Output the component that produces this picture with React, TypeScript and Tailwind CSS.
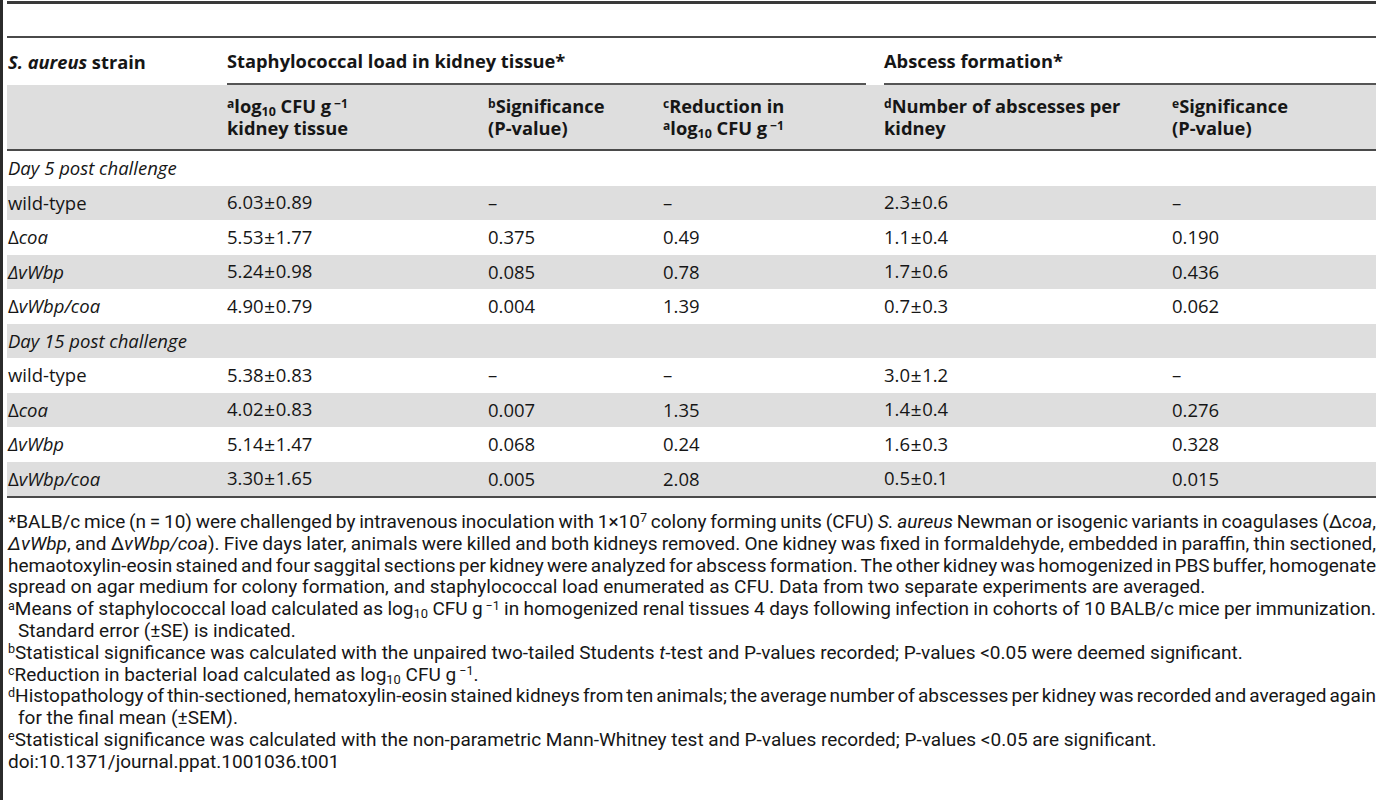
import React from "react";

const cols = "grid grid-cols-[220px_261px_175px_221px_288px_1fr]";

type Row = {
  kind: "section" | "data";
  label: React.ReactNode;
  values?: string[];
};

const rows: Row[] = [
  { kind: "section", label: "Day 5 post challenge" },
  { kind: "data", label: "wild-type", values: ["6.03±0.89", "–", "–", "2.3±0.6", "–"] },
  { kind: "data", label: <>Δ<i>coa</i></>, values: ["5.53±1.77", "0.375", "0.49", "1.1±0.4", "0.190"] },
  { kind: "data", label: <i>ΔvWbp</i>, values: ["5.24±0.98", "0.085", "0.78", "1.7±0.6", "0.436"] },
  { kind: "data", label: <>Δ<i>vWbp/coa</i></>, values: ["4.90±0.79", "0.004", "1.39", "0.7±0.3", "0.062"] },
  { kind: "section", label: "Day 15 post challenge" },
  { kind: "data", label: "wild-type", values: ["5.38±0.83", "–", "–", "3.0±1.2", "–"] },
  { kind: "data", label: <>Δ<i>coa</i></>, values: ["4.02±0.83", "0.007", "1.35", "1.4±0.4", "0.276"] },
  { kind: "data", label: <i>ΔvWbp</i>, values: ["5.14±1.47", "0.068", "0.24", "1.6±0.3", "0.328"] },
  { kind: "data", label: <>Δ<i>vWbp/coa</i></>, values: ["3.30±1.65", "0.005", "2.08", "0.5±0.1", "0.015"] },
];

// "9.99±9.99" -> thin ± like the typeset original
const PlusMinus = ({ text }: { text: string }) => {
  const parts = text.split("±");
  if (parts.length === 1) return <>{text}</>;
  return (
    <>
      {parts[0]}
      <span className="mx-[1px] font-['Liberation_Sans',sans-serif] font-light">±</span>
      {parts[1]}
    </>
  );
};

const Sup = ({ children }: { children: React.ReactNode }) => (
  <span className="relative -top-[0.45em] text-[0.66em] leading-none">{children}</span>
);

const Sub = ({ children }: { children: React.ReactNode }) => (
  <span className="relative top-[0.25em] text-[0.68em] leading-none">{children}</span>
);

const Log = () => (
  <>
    log<Sub>10</Sub> CFU g<Sup>&nbsp;−1</Sup>
  </>
);

// full lines are justified edge to edge; spaces start narrow so the line always fits
const Line = ({ children, full, indent }: { children: React.ReactNode; full?: boolean; indent?: boolean }) => (
  <div
    className={
      "whitespace-nowrap " +
      (full ? "text-justify [text-align-last:justify] [word-spacing:-3px] " : "") +
      (indent ? "pl-[10px]" : "")
    }
  >
    {children}
  </div>
);

export default function App() {
  return (
    <div className="min-h-[800px] bg-white border-l-[3px] border-[#2b2b2b] pl-[4px] pt-px text-[#161616] font-['Open_Sans',sans-serif]">
      <div className="h-[3px] bg-[#3a3a3a]" />
      <div className="h-[32px]" />
      <div className="h-[2px] bg-[#4a4a4a]" />

      {/* header row 1 */}
      <div className={cols + " h-[47px] text-[18.3px] font-bold"}>
        <div className="flex items-center pl-px">
          <span>
            <i>S. aureus</i> strain
          </span>
        </div>
        <div className="col-span-3 pr-[18px]">
          <div className="h-full flex items-center border-b-2 border-[#555]">Staphylococcal load in kidney tissue*</div>
        </div>
        <div className="col-span-2">
          <div className="h-full flex items-center border-b-2 border-[#555]">Abscess formation*</div>
        </div>
      </div>

      {/* header row 2 */}
      <div className={cols + " h-[64px] bg-[#dedede] text-[18.3px] font-bold leading-[22px] items-center"}>
        <div />
        <div>
          <Sup>a</Sup>
          <Log />
          <br />
          kidney tissue
        </div>
        <div>
          <Sup>b</Sup>Significance
          <br />
          (P-value)
        </div>
        <div>
          <Sup>c</Sup>Reduction in
          <br />
          <Sup>a</Sup>
          <Log />
        </div>
        <div>
          <Sup>d</Sup>Number of abscesses per
          <br />
          kidney
        </div>
        <div>
          <Sup>e</Sup>Significance
          <br />
          (P-value)
        </div>
      </div>
      <div className="h-[2px] bg-[#4a4a4a]" />

      {/* body */}
      {rows.map((r, i) => (
        <div key={i} className={cols + " h-[34.5px] items-center text-[18.5px] " + (i % 2 ? "bg-[#dedede]" : "bg-white")}>
          {r.kind === "section" ? (
            <div className="col-span-6 pl-px italic">{r.label}</div>
          ) : (
            <>
              <div className="pl-px">{r.label}</div>
              {r.values!.map((v, j) => (
                <div key={j}>
                  <PlusMinus text={v} />
                </div>
              ))}
            </>
          )}
        </div>
      ))}
      <div className="h-[2px] bg-[#4a4a4a]" />

      {/* footnotes */}
      <div className="mt-[13px] pl-px font-['Roboto',sans-serif] text-[19px] leading-[21.8px]">
        <Line full>
          *BALB/c mice (n = 10) were challenged by intravenous inoculation with 1×10<Sup>7</Sup> colony forming units (CFU){" "}
          <i>S. aureus</i> Newman or isogenic variants in coagulases (Δ<i>coa</i>,
        </Line>
        <Line full>
          <i>ΔvWbp</i>, and Δ<i>vWbp/coa</i>). Five days later, animals were killed and both kidneys removed. One kidney was
          fixed in formaldehyde, embedded in paraffin, thin sectioned,
        </Line>
        <Line full>
          hemaotoxylin-eosin stained and four saggital sections per kidney were analyzed for abscess formation. The other
          kidney was homogenized in PBS buffer, homogenate
        </Line>
        <Line>
          spread on agar medium for colony formation, and staphylococcal load enumerated as CFU. Data from two separate
          experiments are averaged.
        </Line>
        <Line full>
          <Sup>a</Sup>Means of staphylococcal load calculated as <Log /> in homogenized renal tissues 4 days following
          infection in cohorts of 10 BALB/c mice per immunization.
        </Line>
        <Line indent>Standard error (±SE) is indicated.</Line>
        <Line>
          <Sup>b</Sup>Statistical significance was calculated with the unpaired two-tailed Students <i>t</i>-test and
          P-values recorded; P-values &lt;0.05 were deemed significant.
        </Line>
        <Line>
          <Sup>c</Sup>Reduction in bacterial load calculated as <Log />.
        </Line>
        <Line full>
          <Sup>d</Sup>Histopathology of thin-sectioned, hematoxylin-eosin stained kidneys from ten animals; the average
          number of abscesses per kidney was recorded and averaged again
        </Line>
        <Line indent>for the final mean (±SEM).</Line>
        <Line>
          <Sup>e</Sup>Statistical significance was calculated with the non-parametric Mann-Whitney test and P-values
          recorded; P-values &lt;0.05 are significant.
        </Line>
        <Line>doi:10.1371/journal.ppat.1001036.t001</Line>
      </div>
    </div>
  );
}
